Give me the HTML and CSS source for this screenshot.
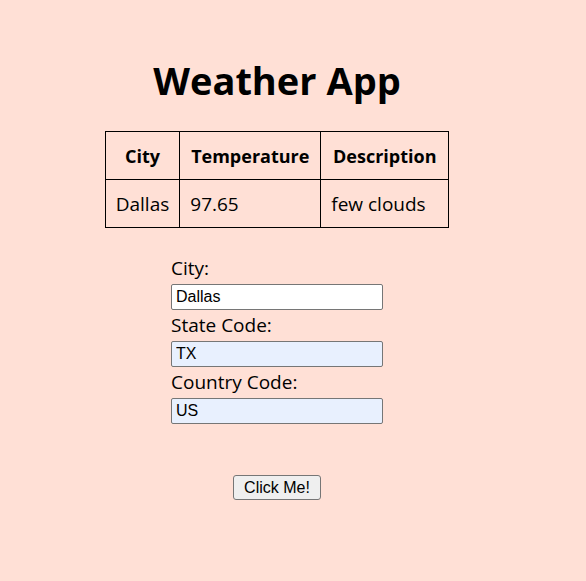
FILE: index.html
```html
<!DOCTYPE html>
<html>
<head>
<meta charset="utf-8">
<title>Weather App</title>
<link rel="stylesheet" href="styles.css">
</head>
<body>
<div class="app">
  <h1 class="title">Weather App</h1>
  <table class="weather">
    <thead>
      <tr><th class="c1">City</th><th class="c2">Temperature</th><th class="c3">Description</th></tr>
    </thead>
    <tbody>
      <tr><td>Dallas</td><td>97.65</td><td>few clouds</td></tr>
    </tbody>
  </table>
  <form class="form">
    <label class="lbl">City:</label>
    <input class="field" type="text" value="Dallas">
    <label class="lbl">State Code:</label>
    <input class="field filled" type="text" value="TX">
    <label class="lbl">Country Code:</label>
    <input class="field filled" type="text" value="US">
  </form>
  <button class="btn" type="button">Click Me!</button>
</div>
</body>
</html>
```
FILE: styles.css
```css
html, body {
  margin: 0;
  padding: 0;
  background: #ffe0d6;
}
body {
  padding: 8px;
  font-family: "Open Sans", "Noto Sans", sans-serif;
  color: #000;
}
.app {
  width: 538px;
  display: flex;
  flex-direction: column;
  align-items: center;
}
.title {
  margin: 45px 0 24px;
  font-size: 38px;
  line-height: 54px;
  font-weight: 700;
}
.weather {
  border-collapse: collapse;
  font-size: 19px;
}
.weather th, .weather td {
  border: 1px solid #000;
  padding: 0 10px;
  height: 47px;
}
.weather th {
  text-align: center;
  font-weight: 700;
  font-size: 18px;
}
.weather td {
  text-align: left;
}
.weather .c1 { width: 52px; }
.weather .c2 { width: 120px; }
.weather .c3 { width: 107px; }
.form {
  margin-top: 25px;
  width: 212px;
  display: flex;
  flex-direction: column;
}
.lbl {
  font-size: 19px;
  line-height: 31px;
}
.field {
  box-sizing: border-box;
  width: 212px;
  height: 26px;
  margin: 0;
  padding: 1px 4px;
  border: 1px solid #767676;
  border-radius: 2px;
  background: #fff;
  font-family: "Liberation Sans", Arial, sans-serif;
  font-size: 16px;
  color: #000;
}
.field.filled {
  background: #e8f0fe;
}
.btn {
  margin-top: 51px;
  width: 88px;
  height: 25px;
  padding: 0;
  border: 1px solid #767676;
  border-radius: 3px;
  background: #efefef;
  font-family: "Liberation Sans", Arial, sans-serif;
  font-size: 16px;
  color: #000;
}
```
